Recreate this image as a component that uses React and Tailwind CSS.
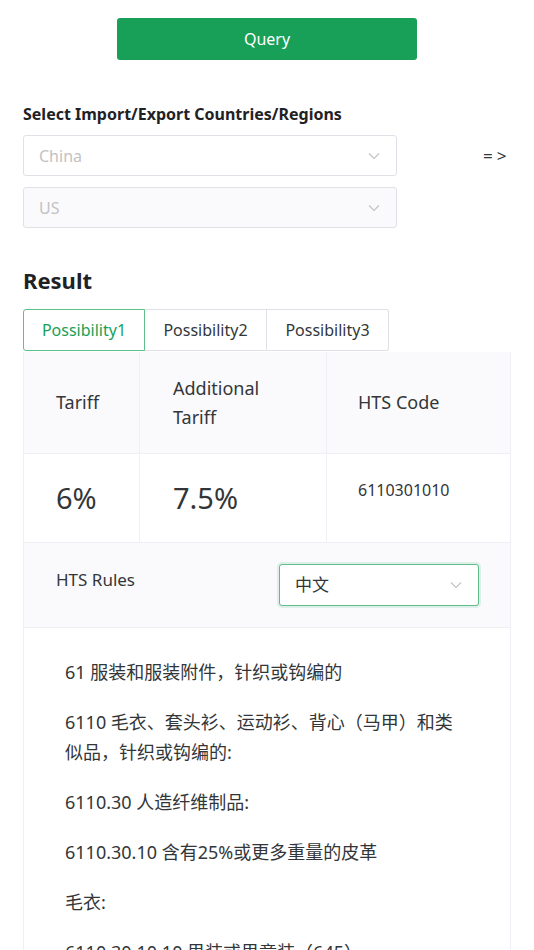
import React from 'react'

const FONT = { fontFamily: '"Noto Sans", "Noto Sans CJK SC", sans-serif' }

const rules = [
  '61 服装和服装附件，针织或钩编的',
  '6110 毛衣、套头衫、运动衫、背心（马甲）和类似品，针织或钩编的:',
  '6110.30 人造纤维制品:',
  '6110.30.10 含有25%或更多重量的皮革',
  '毛衣:',
  '6110.30.10.10 男装或男童装（645）',
]

function Chevron() {
  return (
    <svg width="14" height="14" viewBox="0 0 14 14" fill="none" className="shrink-0">
      <path d="M2 4.5 L7 9.5 L12 4.5" stroke="#c2c2c2" strokeWidth="1.1" />
    </svg>
  )
}

function Select({ value, muted, className }) {
  return (
    <div className={`flex items-center justify-between rounded-[3px] border px-[15px] ${className}`}>
      <span className={muted ? 'text-[#c2c2c2]' : 'text-[#333639]'}>{value}</span>
      <Chevron />
    </div>
  )
}

export default function App() {
  return (
    <div className="w-[534px] h-[950px] overflow-hidden bg-white px-[23px] pt-[18px] text-[#333639]" style={FONT}>
      {/* Query */}
      <button className="ml-[94px] flex h-[42px] w-[300px] items-center justify-center rounded-[3px] bg-[#18a058] text-[16px] text-white">
        Query
      </button>

      {/* Countries */}
      <p className="mt-[44px] text-[16px] font-bold leading-[20px] text-[#1f2225]">Select Import/Export Countries/Regions</p>
      <div className="mt-[11px] flex items-center">
        <Select value="China" muted className="h-[41px] w-[374px] border-[#e0e0e6] bg-white text-[16px]" />
        <span className="ml-[86px] text-[17px] tracking-[4px]">=&gt;</span>
      </div>
      <Select value="US" muted className="mt-[11px] h-[41px] w-[374px] border-[#e0e0e6] bg-[#fafafc] text-[16px]" />

      {/* Result */}
      <h2 className="mt-[37px] text-[22px] font-bold leading-[30px] text-[#1f2225]">Result</h2>
      <div className="mt-[14px] flex h-[42px] text-[16px]">
        <div className="flex w-[122px] items-center justify-center rounded-l-[3px] border-[1.5px] border-[#5fbf8a] text-[#18a058]">Possibility1</div>
        <div className="flex w-[122px] items-center justify-center border-y border-r border-[#e0e0e6]">Possibility2</div>
        <div className="flex w-[122px] items-center justify-center rounded-r-[3px] border-y border-r border-[#e0e0e6]">Possibility3</div>
      </div>

      <div className="mt-[1px] w-[488px] border-x border-[#efeff5]">
        <div className="grid grid-cols-[116px_187px_185px] border-b border-[#efeff5] bg-[#fafafc] text-[18px]">
          <div className="flex h-[101px] items-center border-r border-[#efeff5] pl-[32px]">Tariff</div>
          <div className="flex h-[101px] items-center border-r border-[#efeff5] pl-[33px] leading-[29px]">Additional<br />Tariff</div>
          <div className="flex h-[101px] items-center pl-[31px]">HTS Code</div>
        </div>
        <div className="grid grid-cols-[116px_187px_185px] border-b border-[#efeff5]">
          <div className="flex h-[88px] items-center border-r border-[#efeff5] pl-[32px] text-[29px]">6%</div>
          <div className="flex h-[88px] items-center border-r border-[#efeff5] pl-[33px] text-[29px]">7.5%</div>
          <div className="h-[88px] pl-[31px] pt-[24px] text-[16px] leading-[24px]">6110301010</div>
        </div>
        <div className="flex h-[85px] items-center justify-between border-b border-[#efeff5] bg-[#fafafc] pl-[32px] pr-[31px]">
          <span className="-mt-[10px] text-[17px]">HTS Rules</span>
          <Select value="中文" className="h-[42px] w-[200px] border-[1.5px] border-[#5fbf8a] bg-white text-[17px] shadow-[0_0_0_2px_rgba(24,160,88,0.12)]" />
        </div>
        <div className="pl-[41px] pr-[40px] pt-[29px] text-[18px] leading-[30px]">
          {rules.map((r) => (
            <p key={r} className="mb-[20px]">{r}</p>
          ))}
        </div>
      </div>
    </div>
  )
}
